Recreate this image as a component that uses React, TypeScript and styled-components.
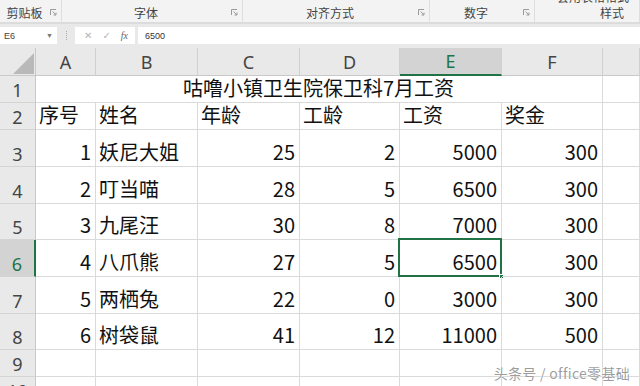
import React from "react";
import styled, { createGlobalStyle } from "styled-components";

const Global = createGlobalStyle`
  html, body { margin: 0; padding: 0; background: #ffffff; overflow: hidden; }
  body { font-family: "Noto Sans CJK SC", "Noto Sans", sans-serif; }
  * { box-sizing: border-box; }
`;

const GREEN = "#217346";
const GRID = "#dadada";

const Page = styled.div`
  position: relative;
  width: 640px;
  height: 386px;
  overflow: hidden;
  display: flex;
  flex-direction: column;
  background: #fff;
`;

/* ---------- Ribbon ---------- */
const Ribbon = styled.div`
  display: flex;
  height: 24px;
  background: #f3f3f3;
  border-bottom: 2px solid #dcdcdc;
  flex: none;
`;

const Group = styled.div<{ $w: number; $justify?: string; $padR?: number }>`
  position: relative;
  width: ${(p) => p.$w}px;
  flex: none;
  display: flex;
  align-items: flex-end;
  justify-content: ${(p) => p.$justify || "center"};
  padding-right: ${(p) => p.$padR ?? 12}px;
  padding-bottom: 1px;
  border-right: 1px solid #dedede;
  overflow: hidden;
`;

const GroupLabel = styled.span`
  font-size: 12px;
  line-height: 16px;
  color: #444;
  white-space: nowrap;
`;

const Launcher = styled.svg`
  position: absolute;
  right: 4px;
  bottom: 6px;
  width: 7px;
  height: 7px;
`;

const CutText = styled.span`
  position: absolute;
  top: -10px;
  right: 10px;
  font-size: 12px;
  line-height: 14px;
  color: #444;
  white-space: nowrap;
`;

const LauncherIcon = () => (
  <Launcher viewBox="0 0 7 7">
    <path d="M0.5 6 V0.5 H6" stroke="#9a9a9a" strokeWidth="1" fill="none" />
    <path d="M2.5 2.5 L6 6 M6 3.5 V6 H3.5" stroke="#9a9a9a" strokeWidth="1" fill="none" />
  </Launcher>
);

/* ---------- Formula bar ---------- */
const FormulaBar = styled.div`
  display: flex;
  align-items: center;
  height: 24px;
  background: #e9e9e9;
  padding: 2px 0 3px;
  flex: none;
`;

const NameBox = styled.div`
  width: 57px;
  height: 17px;
  background: #fff;
  display: flex;
  align-items: center;
  justify-content: space-between;
  padding: 0 4px;
  font-size: 9px;
  color: #444;
  font-family: "Liberation Sans", sans-serif;
`;

const Caret = styled.span`
  font-size: 7px;
  color: #777;
`;

const Grip = styled.div`
  width: 18px;
  display: flex;
  justify-content: center;
`;

const GripDots = styled.span`
  width: 1px;
  height: 9px;
  border-left: 1px dotted #aaa;
`;

const IconBox = styled.div`
  width: 60px;
  height: 17px;
  background: #fff;
  display: flex;
  align-items: center;
  justify-content: space-around;
  padding: 0 2px 0 4px;
  color: #b5b5b5;
  font-size: 10px;
  font-family: "DejaVu Sans", sans-serif;
`;

const Fx = styled.span`
  font-family: "Liberation Serif", serif;
  font-style: italic;
  font-size: 10px;
  color: #666;
`;

const FormulaInput = styled.div`
  flex: 1;
  height: 17px;
  margin-left: 3px;
  background: #fff;
  display: flex;
  align-items: center;
  padding-left: 7px;
  font-size: 9px;
  color: #333;
  font-family: "Liberation Sans", sans-serif;
`;

/* ---------- Sheet ---------- */
const Sheet = styled.div`
  display: grid;
  grid-template-columns: 36px 60px 102px 102px 100px 102px 101px 1fr;
  grid-template-rows: 28px 27px 27px 37px 37px 36px 37px 37px 36px 27px 27px;
  flex: none;
`;

const HeadCell = styled.div<{ $sel?: boolean; $axis: "col" | "row" }>`
  background: ${(p) => (p.$sel ? "#d3d3d3" : "#e9e9e9")};
  color: ${(p) => (p.$sel ? GREEN : "#444")};
  border-right: ${(p) =>
    p.$axis === "row" && p.$sel ? `2px solid ${GREEN}` : p.$axis === "row" ? "1px solid #c9c9c9" : "1px solid #d0d0d0"};
  border-bottom: ${(p) =>
    p.$axis === "col" && p.$sel ? `2px solid ${GREEN}` : p.$axis === "col" ? "1px solid #c9c9c9" : "1px solid #d4d4d4"};
  display: flex;
  justify-content: center;
  align-items: ${(p) => (p.$axis === "row" ? "flex-end" : "center")};
  font-size: 18px;
  line-height: 24px;
  font-family: "Noto Sans", "Noto Sans CJK SC", sans-serif;
`;

const Corner = styled.div`
  background: #e9e9e9;
  border-right: 1px solid #c9c9c9;
  border-bottom: 1px solid #c9c9c9;
  display: flex;
  justify-content: flex-end;
  align-items: flex-end;
  padding: 0 1px 1px 0;
`;

const Cell = styled.div<{ $align?: "left" | "right" | "center"; $span?: number }>`
  position: relative;
  border-right: 1px solid ${GRID};
  border-bottom: 1px solid ${GRID};
  display: flex;
  align-items: flex-end;
  justify-content: ${(p) =>
    p.$align === "right" ? "flex-end" : p.$align === "center" ? "center" : "flex-start"};
  padding: 0 4px 1px 3px;
  font-size: 20px;
  line-height: 26px;
  color: #111;
  white-space: nowrap;
  overflow: visible;
  ${(p) => (p.$span ? `grid-column: span ${p.$span};` : "")}
`;

const Selection = styled.div`
  position: absolute;
  top: -2px;
  left: -2px;
  right: -1px;
  bottom: -1px;
  border: 2px solid ${GREEN};
  pointer-events: none;
`;

const FillHandle = styled.div`
  position: absolute;
  right: -4px;
  bottom: -4px;
  width: 5px;
  height: 5px;
  background: ${GREEN};
  border: 1px solid #fff;
`;

const Watermark = styled.div`
  position: absolute;
  right: 10px;
  top: 364px;
  font-size: 14px;
  line-height: 18px;
  letter-spacing: 0.3px;
  color: rgba(140, 140, 140, 0.85);
  text-shadow: 0 0 2px #fff, 0 0 1px #fff;
  font-family: "Noto Sans CJK SC", "Noto Sans", sans-serif;
`;

const cols = ["A", "B", "C", "D", "E", "F", ""];
const headers = ["序号", "姓名", "年龄", "工龄", "工资", "奖金"];
const data: [number, string, number, number, number, number][] = [
  [1, "妖尼大姐", 25, 2, 5000, 300],
  [2, "叮当喵", 28, 5, 6500, 300],
  [3, "九尾汪", 30, 8, 7000, 300],
  [4, "八爪熊", 27, 5, 6500, 300],
  [5, "两栖兔", 22, 0, 3000, 300],
  [6, "树袋鼠", 41, 12, 11000, 500],
];

export default function App() {
  return (
    <Page>
      <Global />
      <Ribbon>
        <Group $w={62}>
          <GroupLabel>剪贴板</GroupLabel>
          <LauncherIcon />
        </Group>
        <Group $w={181}>
          <GroupLabel>字体</GroupLabel>
          <LauncherIcon />
        </Group>
        <Group $w={187}>
          <GroupLabel>对齐方式</GroupLabel>
          <LauncherIcon />
        </Group>
        <Group $w={105}>
          <GroupLabel>数字</GroupLabel>
          <LauncherIcon />
        </Group>
        <Group $w={105} $justify="flex-end" $padR={15}>
          <CutText>套用表格格式</CutText>
          <GroupLabel>样式</GroupLabel>
        </Group>
      </Ribbon>

      <FormulaBar>
        <NameBox>
          <span>E6</span>
          <Caret>▼</Caret>
        </NameBox>
        <Grip>
          <GripDots />
        </Grip>
        <IconBox>
          <span>✕</span>
          <span>✓</span>
          <Fx>fx</Fx>
        </IconBox>
        <FormulaInput>6500</FormulaInput>
      </FormulaBar>

      <Sheet>
        <Corner>
          <svg width="21" height="21" viewBox="0 0 21 21">
            <polygon points="21,0 21,21 0,21" fill="#b9b9b9" />
          </svg>
        </Corner>
        {cols.map((c, i) => (
          <HeadCell key={"c" + i} $axis="col" $sel={c === "E"}>
            {c}
          </HeadCell>
        ))}

        {/* row 1 */}
        <HeadCell $axis="row">1</HeadCell>
        <Cell $align="center" $span={6}>
          咕噜小镇卫生院保卫科7月工资
        </Cell>
        <Cell />

        {/* row 2 */}
        <HeadCell $axis="row">2</HeadCell>
        {headers.map((h) => (
          <Cell key={h}>{h}</Cell>
        ))}
        <Cell />

        {data.map((r, ri) => {
          const rowNo = ri + 3;
          return (
            <React.Fragment key={rowNo}>
              <HeadCell $axis="row" $sel={rowNo === 6}>
                {rowNo}
              </HeadCell>
              <Cell $align="right">{r[0]}</Cell>
              <Cell>{r[1]}</Cell>
              <Cell $align="right">{r[2]}</Cell>
              <Cell $align="right">{r[3]}</Cell>
              <Cell $align="right">
                {r[4]}
                {rowNo === 6 && (
                  <Selection>
                    <FillHandle />
                  </Selection>
                )}
              </Cell>
              <Cell $align="right">{r[5]}</Cell>
              <Cell />
            </React.Fragment>
          );
        })}

        {[9, 10].map((n) => (
          <React.Fragment key={n}>
            <HeadCell $axis="row">{n}</HeadCell>
            {cols.map((_, i) => (
              <Cell key={i} />
            ))}
          </React.Fragment>
        ))}
      </Sheet>

      <Watermark>头条号 / office零基础</Watermark>
    </Page>
  );
}
